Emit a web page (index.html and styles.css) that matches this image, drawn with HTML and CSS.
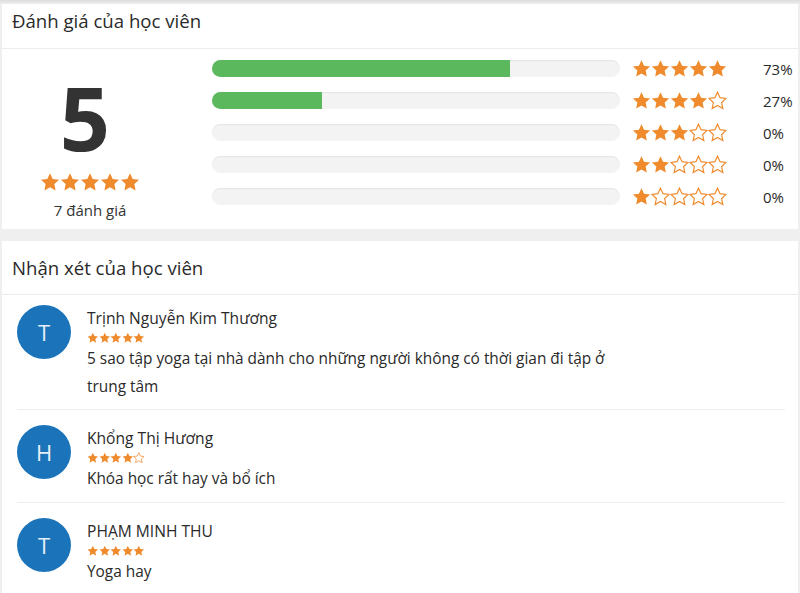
FILE: index.html
```html
<!DOCTYPE html>
<html lang="vi">
<head>
<meta charset="utf-8">
<title>Đánh giá của học viên</title>
<link rel="stylesheet" href="styles.css">
</head>
<body>
<svg class="defs" width="0" height="0" aria-hidden="true">
  <defs>
    <symbol id="star" viewBox="-0.5 -0.5 21 20.5">
      <polygon points="10,0.5 12.82,6.62 19.51,7.41 14.57,11.98 15.88,18.59 10,15.3 4.12,18.59 5.43,11.98 0.49,7.41 7.18,6.62"/>
    </symbol>
  </defs>
</svg>

<section class="card rating-card">
  <h2 class="card-title first">Đánh giá của học viên</h2>
  <div class="rating-body">
    <div class="summary">
      <div class="score">5</div>
      <div class="stars big-summary">
        <svg class="s full"><use href="#star"/></svg><svg class="s full"><use href="#star"/></svg><svg class="s full"><use href="#star"/></svg><svg class="s full"><use href="#star"/></svg><svg class="s full"><use href="#star"/></svg>
      </div>
      <div class="count">7 đánh giá</div>
    </div>
    <div class="rows">
      <div class="row">
        <div class="track"><div class="fill" style="width:73%"></div></div>
        <div class="stars row-stars">
          <svg class="s full"><use href="#star"/></svg><svg class="s full"><use href="#star"/></svg><svg class="s full"><use href="#star"/></svg><svg class="s full"><use href="#star"/></svg><svg class="s full"><use href="#star"/></svg>
        </div>
        <div class="pct">73%</div>
      </div>
      <div class="row">
        <div class="track"><div class="fill" style="width:27%"></div></div>
        <div class="stars row-stars">
          <svg class="s full"><use href="#star"/></svg><svg class="s full"><use href="#star"/></svg><svg class="s full"><use href="#star"/></svg><svg class="s full"><use href="#star"/></svg><svg class="s empty"><use href="#star"/></svg>
        </div>
        <div class="pct">27%</div>
      </div>
      <div class="row">
        <div class="track"><div class="fill" style="width:0%"></div></div>
        <div class="stars row-stars">
          <svg class="s full"><use href="#star"/></svg><svg class="s full"><use href="#star"/></svg><svg class="s full"><use href="#star"/></svg><svg class="s empty"><use href="#star"/></svg><svg class="s empty"><use href="#star"/></svg>
        </div>
        <div class="pct">0%</div>
      </div>
      <div class="row">
        <div class="track"><div class="fill" style="width:0%"></div></div>
        <div class="stars row-stars">
          <svg class="s full"><use href="#star"/></svg><svg class="s full"><use href="#star"/></svg><svg class="s empty"><use href="#star"/></svg><svg class="s empty"><use href="#star"/></svg><svg class="s empty"><use href="#star"/></svg>
        </div>
        <div class="pct">0%</div>
      </div>
      <div class="row">
        <div class="track"><div class="fill" style="width:0%"></div></div>
        <div class="stars row-stars">
          <svg class="s full"><use href="#star"/></svg><svg class="s empty"><use href="#star"/></svg><svg class="s empty"><use href="#star"/></svg><svg class="s empty"><use href="#star"/></svg><svg class="s empty"><use href="#star"/></svg>
        </div>
        <div class="pct">0%</div>
      </div>
    </div>
  </div>
</section>

<section class="card review-card">
  <h2 class="card-title">Nhận xét của học viên</h2>
  <ul class="reviews">
    <li class="review">
      <div class="avatar">T</div>
      <div class="review-body">
        <div class="name">Trịnh Nguyễn Kim Thương</div>
        <div class="stars small">
          <svg class="s full"><use href="#star"/></svg><svg class="s full"><use href="#star"/></svg><svg class="s full"><use href="#star"/></svg><svg class="s full"><use href="#star"/></svg><svg class="s full"><use href="#star"/></svg>
        </div>
        <p class="text">5 sao tập yoga tại nhà dành cho những người không có thời gian đi tập ở trung tâm</p>
      </div>
    </li>
    <li class="review">
      <div class="avatar">H</div>
      <div class="review-body">
        <div class="name">Khổng Thị Hương</div>
        <div class="stars small">
          <svg class="s full"><use href="#star"/></svg><svg class="s full"><use href="#star"/></svg><svg class="s full"><use href="#star"/></svg><svg class="s full"><use href="#star"/></svg><svg class="s empty"><use href="#star"/></svg>
        </div>
        <p class="text">Khóa học rất hay và bổ ích</p>
      </div>
    </li>
    <li class="review">
      <div class="avatar">T</div>
      <div class="review-body">
        <div class="name">PHẠM MINH THU</div>
        <div class="stars small">
          <svg class="s full"><use href="#star"/></svg><svg class="s full"><use href="#star"/></svg><svg class="s full"><use href="#star"/></svg><svg class="s full"><use href="#star"/></svg><svg class="s full"><use href="#star"/></svg>
        </div>
        <p class="text">Yoga hay</p>
      </div>
    </li>
  </ul>
</section>
<div class="bottom-edge"></div>
</body>
</html>
```

FILE: styles.css
```css
* { box-sizing: border-box; }

html, body {
  margin: 0;
  padding: 0;
}

body {
  height: 593px;
  overflow: hidden;
  display: flex;
  flex-direction: column;
  padding: 4px 2px 0 2px;
  background: linear-gradient(#dcdcdc 0, #efefef 4px, #efefef 100%);
  font-family: "Open Sans", "Noto Sans", sans-serif;
  color: #2a2a2a;
}

.defs { position: absolute; width: 0; height: 0; }

.card {
  background: #fff;
}

.card-title {
  margin: 0;
  padding: 13px 10px 12px;
  font-size: 18.6px;
  line-height: 28px;
  font-weight: normal;
  color: #2a2a2a;
  border-bottom: 1px solid #ececec;
}

.card-title.first {
  padding-top: 3px;
  padding-bottom: 13px;
}

/* rating summary */
.rating-body {
  display: flex;
  height: 180px;
}

.summary {
  width: 176px;
  display: flex;
  flex-direction: column;
  align-items: center;
  padding-top: 24px;
}

.score {
  font-size: 88px;
  line-height: 88px;
  font-weight: bold;
  color: #333;
  margin-left: -10px;
}

.stars {
  display: flex;
}

.s { display: block; }
.s.full { fill: #ef8a2d; }
.s.empty { fill: #fff; stroke: #ef8a2d; stroke-width: 1.3; }

.big-summary { margin-top: 11px; }
.big-summary .s { width: 20px; height: 20px; }

.count {
  margin-top: 8px;
  font-size: 15px;
  line-height: 20px;
  color: #333;
}

.rows {
  margin-left: 34px;
  padding-top: 11px;
  display: flex;
  flex-direction: column;
  gap: 15px;
}

.row {
  display: flex;
  align-items: center;
  height: 17px;
}

.track {
  width: 408px;
  height: 17px;
  border-radius: 9px;
  background: #f3f3f3;
  box-shadow: inset 0 1px 1px rgba(0,0,0,0.06);
  overflow: hidden;
}

.fill {
  height: 100%;
  background: #5cb85c;
}

.row-stars {
  margin-left: 12px;
}
.row-stars .s { width: 19px; height: 19px; }

.pct {
  margin-left: 36px;
  font-size: 15px;
  color: #2a2a2a;
}

/* reviews */
.review-card {
  margin-top: 12px;
  flex: 1;
}

.reviews {
  list-style: none;
  margin: 0;
  padding: 0 13px 0 15px;
}

.review {
  display: flex;
  gap: 16px;
  padding: 15px 0 9px;
  border-bottom: 1px solid #eeeeee;
}

.review:first-child { padding-top: 10px; padding-bottom: 8px; }
.review:last-child { border-bottom: none; }

.avatar {
  flex: none;
  width: 54px;
  height: 54px;
  border-radius: 50%;
  background: #1b74b9;
  color: #e6eff8;
  font-size: 22px;
  display: flex;
  align-items: center;
  justify-content: center;
}

.review-body {
  max-width: 550px;
}

.name {
  font-size: 15.6px;
  line-height: 26px;
  color: #2a2a2a;
}

.stars.small {
  height: 14px;
  align-items: center;
}
.stars.small .s { width: 11.6px; height: 11.6px; }

.text {
  margin: 0;
  font-size: 15.4px;
  line-height: 28px;
  color: #2a2a2a;
}

.bottom-edge {
  flex: none;
  height: 2px;
  margin: 0 -2px;
  background: #3a3a3a;
}
```
